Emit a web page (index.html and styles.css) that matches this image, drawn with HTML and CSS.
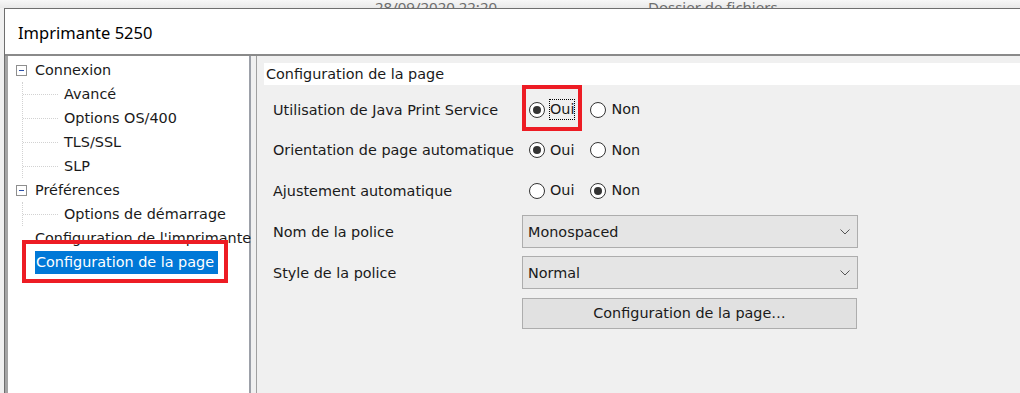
FILE: index.html
```html
<!DOCTYPE html>
<html lang="fr">
<head>
  <meta charset="UTF-8" />
  <title>Imprimante 5250</title>
  <link rel="stylesheet" href="styles.css">
</head>
<body>
  <div class="screen">
    <div class="behind">
      <span class="behind-date">28/09/2020 22:20</span>
      <span class="behind-kind">Dossier de fichiers</span>
    </div>

    <div class="window">
      <div class="titlebar">Imprimante 5250</div>

      <div class="client">
        <ul class="tree">
          <li>
            <div class="node">
              <svg class="toggle" width="11" height="11" viewBox="0 0 11 11">
                <rect x="0.5" y="0.5" width="10" height="10" fill="#fff" stroke="#8f8f8f" />
                <line x1="3" y1="5.5" x2="8" y2="5.5" stroke="#2b4fa8" stroke-width="1" />
              </svg>
              <span class="label">Connexion</span>
            </div>
            <ul class="children">
              <li class="leaf">Avancé</li>
              <li class="leaf">Options OS/400</li>
              <li class="leaf">TLS/SSL</li>
              <li class="leaf">SLP</li>
            </ul>
          </li>
          <li>
            <div class="node">
              <svg class="toggle" width="11" height="11" viewBox="0 0 11 11">
                <rect x="0.5" y="0.5" width="10" height="10" fill="#fff" stroke="#8f8f8f" />
                <line x1="3" y1="5.5" x2="8" y2="5.5" stroke="#2b4fa8" stroke-width="1" />
              </svg>
              <span class="label">Préférences</span>
            </div>
            <ul class="children">
              <li class="leaf">Options de démarrage</li>
            </ul>
          </li>
          <li class="node top-leaf"><span class="label">Configuration de l'imprimante</span></li>
          <li class="node top-leaf"><span class="label selected">Configuration de la page</span></li>
        </ul>

        <div class="splitter"></div>

        <div class="main">
          <div class="section-title">Configuration de la page</div>

          <div class="form">
            <div class="field-label">Utilisation de Java Print Service</div>
            <div class="radios">
              <span class="radio checked"></span><span class="opt focused">Oui</span>
              <span class="radio"></span><span class="opt">Non</span>
            </div>

            <div class="field-label">Orientation de page automatique</div>
            <div class="radios">
              <span class="radio checked"></span><span class="opt">Oui</span>
              <span class="radio"></span><span class="opt">Non</span>
            </div>

            <div class="field-label">Ajustement automatique</div>
            <div class="radios">
              <span class="radio"></span><span class="opt">Oui</span>
              <span class="radio checked"></span><span class="opt">Non</span>
            </div>

            <div class="field-label">Nom de la police</div>
            <div class="combo">
              <span>Monospaced</span>
              <svg width="10" height="6" viewBox="0 0 10 6"><polyline points="0.5,0.5 5,5 9.5,0.5" fill="none" stroke="#555" /></svg>
            </div>

            <div class="field-label">Style de la police</div>
            <div class="combo">
              <span>Normal</span>
              <svg width="10" height="6" viewBox="0 0 10 6"><polyline points="0.5,0.5 5,5 9.5,0.5" fill="none" stroke="#555" /></svg>
            </div>

            <div></div>
            <button class="btn">Configuration de la page…</button>
          </div>
        </div>
      </div>
    </div>

    <div class="mark mark-tree"></div>
    <div class="mark mark-radio"></div>
  </div>
</body>
</html>
```

FILE: styles.css
```css
body {
  margin: 0;
  background: #f0f0f0;
  font-family: 'DejaVu Sans', Verdana, sans-serif;
  font-size: 14.4px;
  color: #1a1a1a;
}
.screen {
  position: relative;
  width: 1020px;
  height: 393px;
  overflow: hidden;
  display: flex;
  flex-direction: column;
}
.behind {
  height: 8px;
  overflow: hidden;
  flex: none;
  font-family: 'Noto Sans', 'Open Sans', sans-serif;
  font-size: 15px;
  line-height: 15px;
  color: #6d6d6d;
  background: linear-gradient(#f7f7f7, #e9e9e9);
}
.behind span {
  display: inline-block;
  margin-top: -5px;
}
.behind-date {
  margin-left: 375px;
}
.behind-kind {
  margin-left: 147px;
}
.window {
  flex: 1;
  margin-left: 4px;
  border-left: 1px solid #6e6e6e;
  border-top: 1px solid #6e6e6e;
  background: #fff;
  display: flex;
  flex-direction: column;
}
.titlebar {
  height: 47px;
  flex: none;
  display: flex;
  align-items: center;
  padding: 2px 0 0 13px;
  box-sizing: border-box;
  font-family: 'Noto Sans', 'Open Sans', sans-serif;
  font-size: 16.5px;
  color: #000;
  border-bottom: 2px solid #8a8a8a;
}
.client {
  flex: 1;
  display: flex;
  background: #f0f0f0;
}

/* tree */
.tree, .children {
  list-style: none;
  margin: 0;
  padding: 0;
}
.tree {
  width: 246px;
  box-sizing: border-box;
  background: #fff;
  border-left: 3px solid #a4a4a4;
  border-right: 2px solid #9ca0a8;
  padding-top: 2px;
}
.node {
  display: flex;
  align-items: center;
  height: 24px;
  padding-left: 8px;
}
.toggle {
  flex: none;
  margin-right: 8px;
}
.top-leaf {
  padding-left: 27px;
}
.label {
  white-space: nowrap;
}
.selected {
  background: #0078d7;
  color: #fff;
  line-height: 23px;
  padding: 0 4px 0 1px;
}
.children {
  margin-left: 14px;
  border-left: 1px dotted #d2d2d2;
}
.leaf {
  display: flex;
  align-items: center;
  height: 24px;
  white-space: nowrap;
}
.leaf::before {
  content: '';
  width: 35px;
  border-top: 1px dotted #d2d2d2;
  margin-right: 6px;
}
.splitter {
  width: 5px;
  flex: none;
}

/* right panel */
.main {
  flex: 1;
  border-left: 1px solid #a0a0a0;
  padding: 7px 0 0 7px;
}
.section-title {
  background: #fff;
  height: 22px;
  line-height: 22px;
  padding-left: 2px;
}
.form {
  display: grid;
  grid-template-columns: 249px 336px;
  grid-template-rows: 41px 40px 41px 41px 41px 40px;
  align-items: center;
  margin: 4px 0 0 9px;
}
.field-label {
  white-space: nowrap;
}
.radios {
  display: flex;
  align-items: center;
  padding-left: 7px;
}
.radio {
  width: 16px;
  height: 16px;
  box-sizing: border-box;
  border: 1px solid #333;
  border-radius: 50%;
  background: #fff;
  display: flex;
  align-items: center;
  justify-content: center;
}
.radio.checked::after {
  content: '';
  width: 8px;
  height: 8px;
  border-radius: 50%;
  background: #333;
}
.opt {
  margin-left: 5px;
  margin-right: 16px;
  line-height: 19px;
}
.opt.focused {
  outline: 1px dotted #000;
  outline-offset: 0;
}
.combo {
  height: 33px;
  box-sizing: border-box;
  background: #e5e5e5;
  border: 1px solid #adadad;
  display: flex;
  align-items: center;
  justify-content: space-between;
  padding: 0 7px 0 5px;
}
.btn {
  height: 31px;
  width: 335px;
  box-sizing: border-box;
  background: #e1e1e1;
  border: 1px solid #adadad;
  font-family: inherit;
  font-size: 14.4px;
  color: #1a1a1a;
  padding: 0;
}

/* red annotation frames */
.mark {
  position: absolute;
  border: 4px solid #ed1c24;
  box-sizing: border-box;
}
.mark-tree {
  left: 22px;
  top: 240px;
  width: 206px;
  height: 43px;
}
.mark-radio {
  left: 522px;
  top: 85px;
  width: 60px;
  height: 46px;
}
```
